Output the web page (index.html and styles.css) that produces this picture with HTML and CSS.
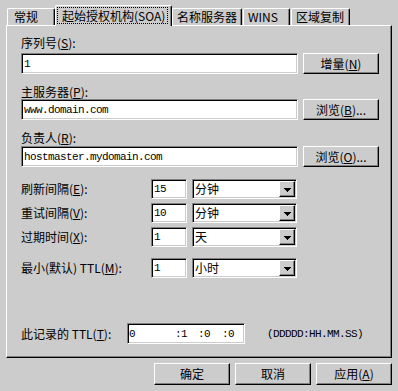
FILE: index.html
```html
<!DOCTYPE html>
<html lang="zh-CN">
<head>
<meta charset="utf-8">
<title>起始授权机构(SOA)</title>
<link rel="stylesheet" href="styles.css">
</head>
<body>
<div class="dialog">
  <div class="tabs">
    <div class="tab t1">常规</div>
    <div class="tab active t2"><span class="focus">起始授权机构(SOA)</span></div>
    <div class="tab t3">名称服务器</div>
    <div class="tab t4">WINS</div>
    <div class="tab t5">区域复制</div>
  </div>
  <div class="panel">
    <div class="lbl l1">序列号(<u>S</u>):</div>
    <div class="row r-a">
      <div class="field wide"><span class="mono">1</span></div>
      <div class="btn">增量(<u>N</u>)</div>
    </div>
    <div class="lbl l2">主服务器(<u>P</u>):</div>
    <div class="row r-b">
      <div class="field wide"><span class="mono">www.domain.com</span></div>
      <div class="btn">浏览(<u>B</u>)...</div>
    </div>
    <div class="lbl l3">负责人(<u>R</u>):</div>
    <div class="row r-c">
      <div class="field wide"><span class="mono">hostmaster.mydomain.com</span></div>
      <div class="btn">浏览(<u>O</u>)...</div>
    </div>
    <div class="row ir ir1">
      <div class="rl">刷新间隔(<u>E</u>):</div>
      <div class="field small"><span class="mono">15</span></div>
      <div class="field combo"><span>分钟</span><span class="drop"><svg width="7" height="4" viewBox="0 0 7 4" shape-rendering="crispEdges"><path d="M0 0h7v1H0zM1 1h5v1H1zM2 2h3v1H2zM3 3h1v1H3z"/></svg></span></div>
    </div>
    <div class="row ir ir2">
      <div class="rl">重试间隔(<u>V</u>):</div>
      <div class="field small"><span class="mono">10</span></div>
      <div class="field combo"><span>分钟</span><span class="drop"><svg width="7" height="4" viewBox="0 0 7 4" shape-rendering="crispEdges"><path d="M0 0h7v1H0zM1 1h5v1H1zM2 2h3v1H2zM3 3h1v1H3z"/></svg></span></div>
    </div>
    <div class="row ir ir3">
      <div class="rl">过期时间(<u>X</u>):</div>
      <div class="field small"><span class="mono">1</span></div>
      <div class="field combo"><span>天</span><span class="drop"><svg width="7" height="4" viewBox="0 0 7 4" shape-rendering="crispEdges"><path d="M0 0h7v1H0zM1 1h5v1H1zM2 2h3v1H2zM3 3h1v1H3z"/></svg></span></div>
    </div>
    <div class="row ir ir4">
      <div class="rl">最小(默认) TTL(<u>M</u>):</div>
      <div class="field small"><span class="mono">1</span></div>
      <div class="field combo"><span>小时</span><span class="drop"><svg width="7" height="4" viewBox="0 0 7 4" shape-rendering="crispEdges"><path d="M0 0h7v1H0zM1 1h5v1H1zM2 2h3v1H2zM3 3h1v1H3z"/></svg></span></div>
    </div>
    <div class="row ttl">
      <div class="tl">此记录的 TTL(<u>T</u>):</div>
      <div class="field ttlf mono"><span class="p0">0</span><span class="p1">:1</span><span class="p2">:0</span><span>:0</span></div>
      <div class="fmt mono">(DDDDD:HH.MM.SS)</div>
    </div>
  </div>
  <div class="footer">
    <div class="btn fb">确定</div>
    <div class="btn fb">取消</div>
    <div class="btn fb">应用(<u>A</u>)</div>
  </div>
</div>
</body>
</html>
```
FILE: styles.css
```css
body {
  margin: 0;
  background: #cccccc;
  color: #000;
  font-family: "Noto Sans CJK SC", "Noto Sans", sans-serif;
  font-size: 12px;
  line-height: 14px;
}
u { text-decoration: underline; text-underline-offset: 1px; }

.dialog { width: 398px; height: 391px; }

.tabs {
  display: flex;
  align-items: flex-end;
  height: 25px;
  padding-left: 7px;
  box-sizing: border-box;
}
.tab {
  height: 17px;
  box-sizing: border-box;
  border: 1px solid;
  border-bottom: none;
  border-color: #fff #000 #000 #fff;
  border-radius: 2px 2px 0 0;
  box-shadow: inset -1px 0 #808080;
  padding: 1px 0 0 6px;
  white-space: nowrap;
}
.t1 { width: 48px; }
.t2 { width: 117px; }
.t3 { width: 70px; padding-left: 4px; }
.t4 { width: 47px; margin-left: 1px; padding-left: 4px; }
.t5 { width: 59px; margin-left: 1px; padding-left: 4px; }
.active {
  height: 21px;
  margin-bottom: -1px;
  position: relative;
  z-index: 1;
  background: #cccccc;
  padding: 1px 0 0 1px;
}
.focus {
  display: block;
  width: 111px;
  height: 17px;
  box-sizing: border-box;
  border: 1px dotted #000;
  padding-left: 4px;
  line-height: 15px;
}

.panel {
  margin-left: 6px;
  width: 386px;
  height: 333px;
  box-sizing: border-box;
  border: 1px solid;
  border-color: #fff #000 #000 #fff;
  box-shadow: inset -1px -1px #808080;
  padding-left: 14px;
  display: flow-root;
}

.lbl { height: 14px; }
.l1 { margin-top: 10px; }
.l2 { margin-top: 11px; }
.l3 { margin-top: 11px; }

.row { display: flex; align-items: center; }
.r-a { margin-top: 3px; }
.r-b { margin-top: 0; }
.r-c { margin-top: 1px; }
.ir1 { margin-top: 12px; }
.ir2 { margin-top: 4px; }
.ir3 { margin-top: 4px; }
.ir4 { margin-top: 11px; }
.ttl { margin-top: 45px; }

.field {
  box-sizing: border-box;
  background: #fff;
  border: 1px solid;
  border-color: #808080 #fff #fff #808080;
  box-shadow: inset 1px 1px #000, inset -1px -1px #cccccc;
  padding: 0 0 0 1px;
  display: flex;
  align-items: center;
  white-space: nowrap;
}
.mono {
  font-family: "Liberation Mono", monospace;
  font-size: 11px;
  letter-spacing: -0.6px;
}
.field .mono { padding-left: 1px; }
.wide { width: 277px; height: 21px; }

.btn {
  box-sizing: border-box;
  width: 76px;
  height: 21px;
  margin-left: 5px;
  border: 1px solid;
  border-color: #fff #000 #000 #fff;
  box-shadow: inset -1px -1px #808080;
  display: flex;
  align-items: center;
  justify-content: center;
  white-space: nowrap;
}

.rl { width: 130px; white-space: nowrap; }
.small { width: 36px; height: 20px; }
.combo {
  width: 105px;
  height: 20px;
  margin-left: 5px;
  padding: 1px 1px 1px 2px;
  justify-content: space-between;
}
.drop {
  box-sizing: border-box;
  width: 16px;
  height: 16px;
  border: 1px solid;
  border-color: #fff #000 #000 #fff;
  box-shadow: inset -1px -1px #808080;
  background: #cccccc;
  display: flex;
  align-items: center;
  justify-content: center;
}
.drop svg { display: block; margin-top: 1px; }

.tl { width: 106px; white-space: nowrap; }
.ttlf { width: 118px; height: 21px; padding-left: 1px; }
.p0 { width: 46px; }
.p1 { width: 23px; }
.p2 { width: 24px; }
.fmt { margin-left: 22px; }

.footer {
  display: flex;
  justify-content: flex-end;
  gap: 5px;
  padding-right: 6px;
  margin-top: 5px;
}
.fb { height: 22px; margin-left: 0; }
```
